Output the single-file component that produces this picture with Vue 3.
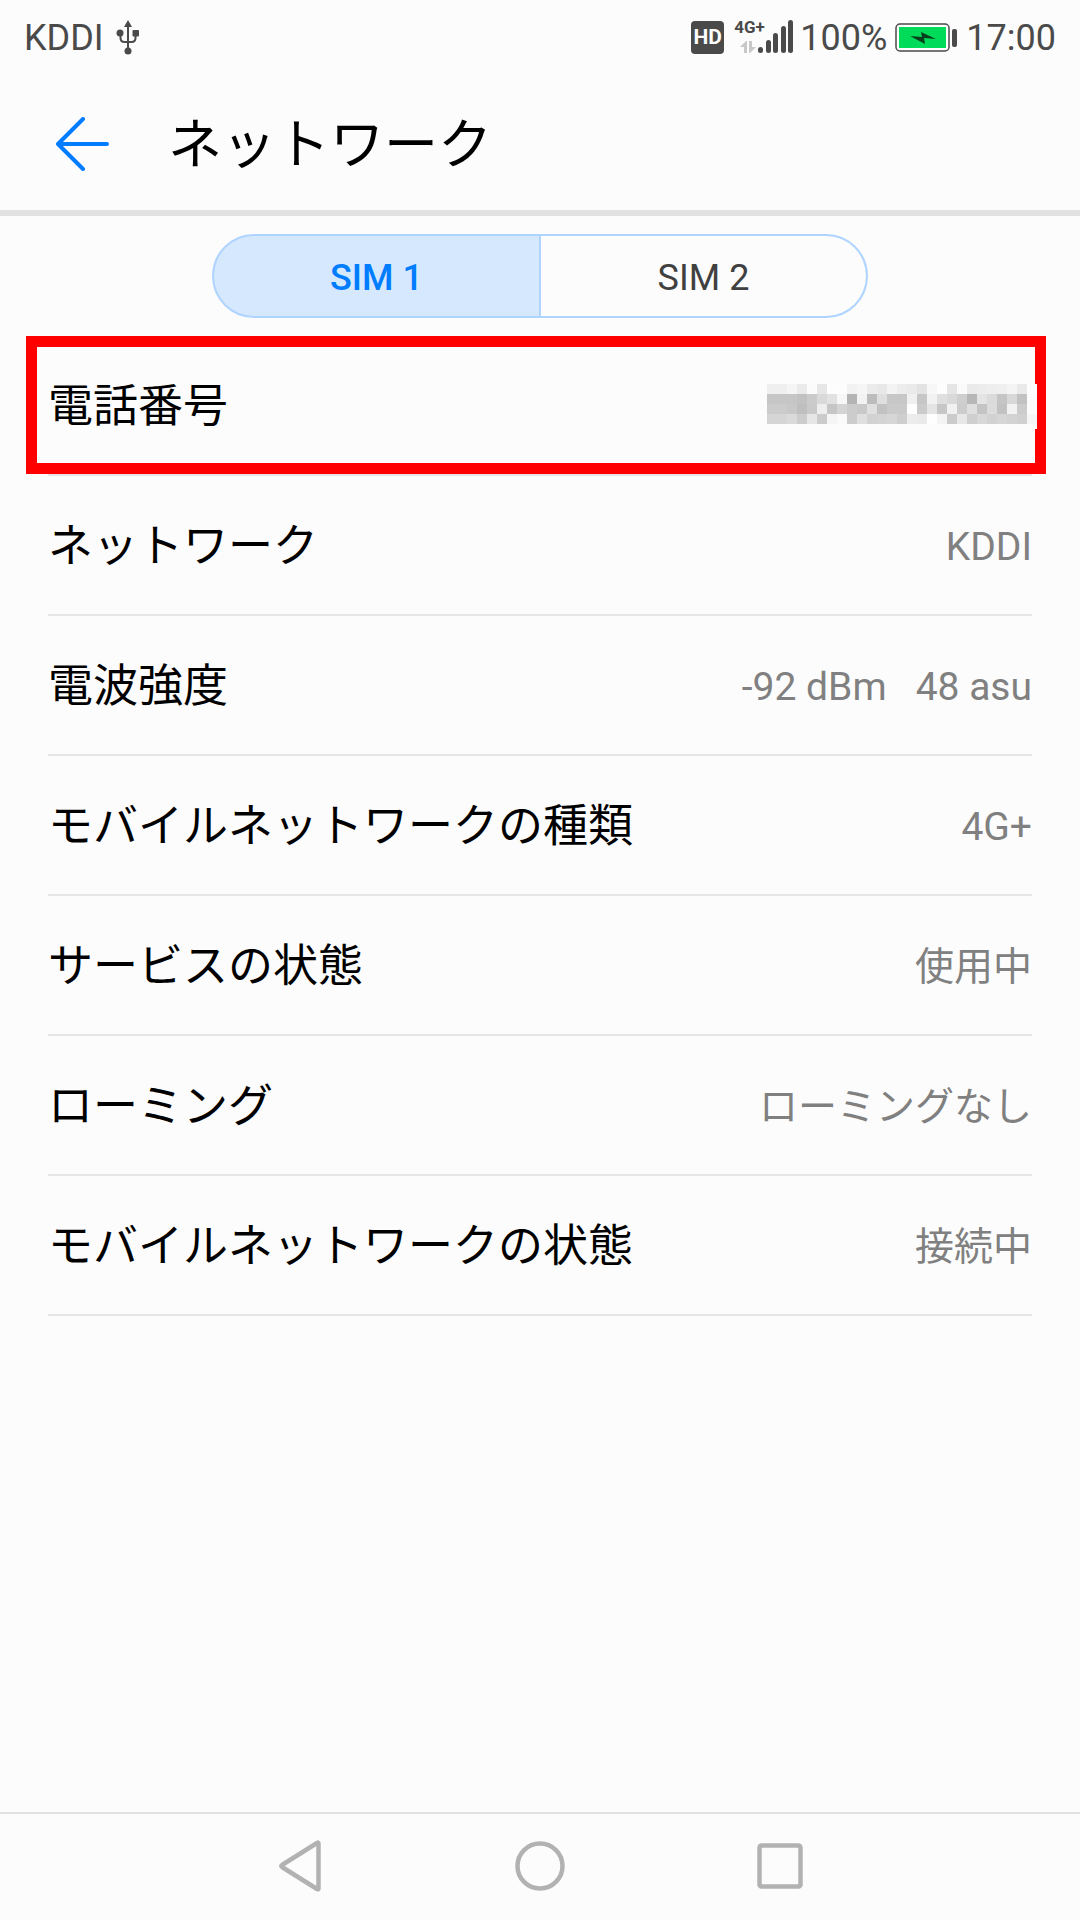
<script setup>
import { ref } from 'vue'

const sims = ['SIM 1', 'SIM 2']
const activeSim = ref(0)

const rows = [
  { label: '電話番号', masked: true },
  { label: 'ネットワーク', value: 'KDDI' },
  { label: '電波強度', value: '-92 dBm   48 asu' },
  { label: 'モバイルネットワークの種類', value: '4G+' },
  { label: 'サービスの状態', value: '使用中' },
  { label: 'ローミング', value: 'ローミングなし' },
  { label: 'モバイルネットワークの状態', value: '接続中' },
]

// Grey level of each mosaic tile, one byte per tile
const mosaic = [
  'ef ef f5 ea fb e6 fd fd f2 f6 eb e8 f3 ed ea e3 f7 fd e5 fa ea ec ee ef f4 e9 fd',
  'c6 c6 c6 c2 cb d9 e1 f7 b4 f3 bc df c7 c7 f0 c6 f2 df d9 cf b7 e4 db c5 d8 c2 fb',
  'cb cb c8 bf c9 ee c6 d4 cc c9 e0 c2 ca ca fe cb e4 c7 f1 cc df c4 dc c2 f2 cc fb',
  'd5 d5 da cc e6 cb f5 fa cc df d2 d4 d6 ce ec ea fe f4 cb e7 cf d8 d2 d6 d3 d0 f5',
].map((line) => line.split(' ').map((g) => `#${g}${g}${g}`))
</script>

<template>
  <div class="screen">
    <div class="status">
      <span>KDDI</span>
      <svg class="usb" width="24" height="36" viewBox="0 0 24 36" aria-hidden="true">
        <path d="M12 6v24M4.500 13v5q0 4 4 4h7q4 0 4-4v-5" fill="none" stroke="#4a4a4a" stroke-width="2" />
        <path d="M12 0l4 7H8z" fill="#4a4a4a" />
        <circle cx="4" cy="13" r="3.500" fill="#4a4a4a" />
        <rect x="16.500" y="10" width="6.500" height="6.500" rx="1" fill="#4a4a4a" />
        <circle cx="12" cy="31" r="3.500" fill="#4a4a4a" />
      </svg>
      <span class="hd">HD</span>
      <span class="cell">
        <span class="cell-type">4G+</span>
        <svg width="60" height="36" viewBox="0 0 60 36" aria-hidden="true">
          <g fill="#4a4a4a">
            <rect x="24" y="28" width="5" height="6" rx="2.500" />
            <rect x="32" y="21" width="5" height="13" rx="2.500" />
            <rect x="39" y="14" width="5" height="20" rx="2.500" />
            <rect x="47" y="7" width="5" height="27" rx="2.500" />
            <rect x="54" y="1" width="5" height="33" rx="2.500" />
          </g>
          <path d="M6 28l6-6h1v12h-3v-6zM15 22h3v6h4l-6 6h-1z" fill="#c8c8c8" />
        </svg>
      </span>
      <span class="percent">100%</span>
      <svg class="battery" width="62" height="30" viewBox="0 0 62 30" aria-hidden="true">
        <rect x="1" y="1" width="53" height="27" rx="4" fill="#fff" stroke="#4a4a4a" stroke-width="1.500" />
        <rect x="4" y="4" width="47" height="21" fill="#00dc5a" />
        <path d="M15 13l12 1-1-5 15 7-12-1 1 6z" fill="#053f1c" />
        <rect x="57" y="6" width="5" height="18" rx="2" fill="#4a4a4a" />
      </svg>
      <span>17:00</span>
    </div>

    <header class="header">
      <button class="back" type="button" aria-label="戻る">
        <svg width="54" height="54" viewBox="0 0 54 54" aria-hidden="true">
          <path d="M28 2L3 27l25 25M3 27h49" fill="none" stroke="#007dff" stroke-width="4" stroke-linecap="round" stroke-linejoin="round" />
        </svg>
      </button>
      <h1>ネットワーク</h1>
    </header>

    <main class="content">
      <div class="tabs" role="tablist">
        <button
          v-for="(sim, i) in sims"
          :key="sim"
          type="button"
          role="tab"
          class="tab"
          :class="{ active: i === activeSim }"
          :aria-selected="i === activeSim"
          @click="activeSim = i"
        >{{ sim }}</button>
      </div>

      <dl class="list">
        <div v-for="row in rows" :key="row.label" class="row" :class="{ highlighted: row.masked }">
          <dt>{{ row.label }}</dt>
          <dd v-if="row.masked" class="masked">
            <svg width="270" height="46" viewBox="0 0 270 46" shape-rendering="crispEdges" aria-hidden="true">
              <rect width="270" height="45" fill="#fcfcfc" />
              <template v-for="(line, y) in mosaic" :key="y">
                <rect v-for="(tone, x) in line" :key="x" :x="x * 10" :y="y * 10" width="10" height="10" :fill="tone" />
              </template>
            </svg>
          </dd>
          <dd v-else>{{ row.value }}</dd>
        </div>
      </dl>
    </main>

    <nav class="nav">
      <button type="button" aria-label="戻る">
        <svg width="52" height="52" viewBox="0 0 52 52" aria-hidden="true">
          <path d="M44.500 3.500v45q0 1.500-1.500.500L8 27q-1.500-1 0-2L43 3q1.500-1 1.500.500z" />
        </svg>
      </button>
      <button type="button" aria-label="ホーム">
        <svg width="52" height="52" viewBox="0 0 52 52" aria-hidden="true"><circle cx="26" cy="26" r="22.500" /></svg>
      </button>
      <button type="button" aria-label="履歴">
        <svg width="52" height="52" viewBox="0 0 52 52" aria-hidden="true"><rect x="5.500" y="5.500" width="41" height="41" rx="2" /></svg>
      </button>
    </nav>
  </div>
</template>

<style>
body {
  margin: 0;
  background: #fcfcfc;
}
</style>

<style scoped>
.screen {
  display: flex;
  flex-direction: column;
  min-height: 100vh;
  background: #fcfcfc;
  color: #000;
  font-family: Roboto, "Noto Sans CJK JP", sans-serif;
}

button {
  margin: 0;
  padding: 0;
  border: 0;
  background: none;
  font: inherit;
  color: inherit;
  cursor: pointer;
}

svg {
  display: block;
}

.status {
  display: flex;
  align-items: center;
  box-sizing: border-box;
  height: 76px;
  padding: 0 24px;
  color: #4a4a4a;
  font-size: 36px;
  line-height: 42px;
}

.usb {
  margin-left: 12px;
}

.hd {
  width: 33px;
  margin-bottom: 2px;
  margin-left: auto;
  border-radius: 4px;
  background: #4a4a4a;
  color: #fcfcfc;
  font-size: 21px;
  font-weight: 700;
  line-height: 33px;
  text-align: center;
}

.cell {
  position: relative;
  margin: 0 6px 2px 10px;
}

.cell-type {
  position: absolute;
  top: 0;
  left: 0;
  font-size: 17px;
  font-weight: 700;
  line-height: 17px;
}

.battery {
  margin: 0 9px 0 8px;
}

.header {
  display: flex;
  align-items: center;
  gap: 59px;
  height: 132px;
  padding: 2px 55px 0;
  border-bottom: 6px solid #e1e1e1;
}

.header h1 {
  margin: 0;
  padding-top: 4px;
  font-size: 54px;
  font-weight: 400;
  line-height: 64px;
}

.content {
  flex: 1;
  padding: 18px 48px;
}

.tabs {
  display: grid;
  grid-template-columns: 1fr 1fr;
  gap: 2px;
  box-sizing: border-box;
  max-width: 656px;
  height: 84px;
  margin: 0 auto 18px;
  overflow: hidden;
  border: 2px solid #afd4ff;
  border-radius: 42px;
  background: #afd4ff;
}

.tab {
  padding-top: 4px;
  background: #fcfcfc;
  color: #404040;
  font-size: 36px;
}

.tab.active {
  background: #d6e8fd;
  color: #007dff;
  font-weight: 500;
}

.list {
  margin: 0;
}

.row {
  position: relative;
  display: flex;
  align-items: center;
  justify-content: space-between;
  height: 134px;
  padding-top: 4px;
  border-bottom: 2px solid #e6e6e6;
}

.row dt {
  font-size: 45px;
  line-height: 54px;
}

.row dd {
  margin: 0;
  color: #808080;
  font-size: 39px;
  line-height: 46px;
  white-space: pre;
}

.highlighted::before {
  content: "";
  position: absolute;
  inset: 0 -14px 0 -22px;
  border: 11px solid #f00;
}

.row .masked {
  position: relative;
  margin-right: -5px;
}

.nav {
  display: flex;
  align-items: center;
  justify-content: center;
  gap: 188px;
  height: 104px;
  padding-bottom: 2px;
  border-top: 2px solid #e1e1e1;
}

.nav svg {
  fill: none;
  stroke: #b2b2b2;
  stroke-width: 4.5;
}
</style>
